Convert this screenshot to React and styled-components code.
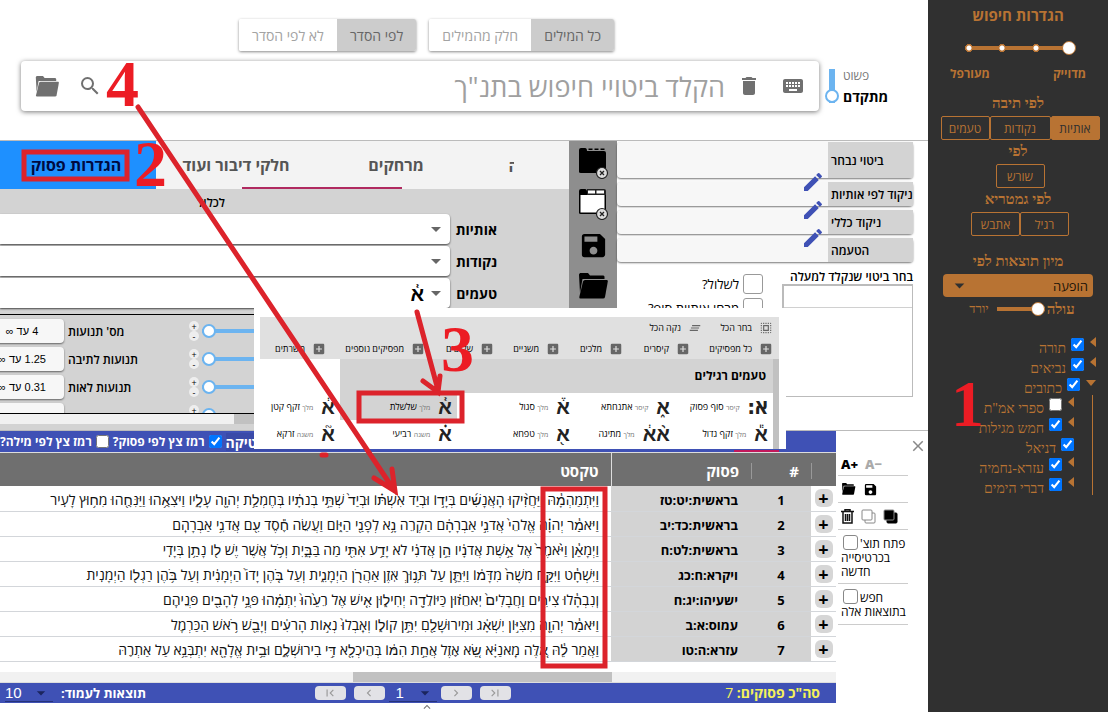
import React from "react";
import styled, { createGlobalStyle } from "styled-components";
import {
  MdKeyboard, MdDelete, MdSearch, MdEdit, MdSave, MdAddBox, MdSelectAll, MdClearAll,
  MdArrowDropDown, MdFirstPage, MdLastPage, MdChevronLeft, MdChevronRight, MdClose, MdExpandLess,
} from "react-icons/md";

const sans = `"Open Sans", "Noto Sans", "DejaVu Sans", sans-serif`;
const serif = `"Liberation Serif", "DejaVu Serif", serif`;
const orange = "#b87333";
const indigo = "#3f51b5";
const sky = "#6cb4f0";
const red = "#dc232b";

const GlobalStyle = createGlobalStyle`
  * { box-sizing: border-box; }
  body { margin: 0; background: #fff; color: #000; font-family: ${sans}; font-size: 12px; }
  button, input, select { font: inherit; color: inherit; margin: 0; }
  button { padding: 0; border: 0; background: none; cursor: pointer; }
`;

const Page = styled.div`
  position: relative;
  display: flex;
  direction: rtl;
  min-height: 100vh;
  overflow: hidden;
`;

const Slider = styled.input.attrs({ type: "range" })`
  appearance: none;
  display: block;
  min-width: 0;
  height: 14px;
  background: linear-gradient(${(p) => p.$color}, ${(p) => p.$color}) center / 100% 4px no-repeat;
  &::-webkit-slider-thumb {
    appearance: none;
    width: 14px;
    height: 14px;
    border: ${(p) => p.$edge || 1}px solid ${(p) => p.$color};
    border-radius: 50%;
    background: #fff;
  }
`;

/* ---------- settings sidebar ---------- */

const Sidebar = styled.aside`
  flex: 0 0 180px;
  display: flex;
  flex-direction: column;
  align-items: center;
  padding: 4px 8px 0;
  background: #303030;
  color: ${orange};
`;
const SideTitle = styled.h2`
  margin: 0;
  font-size: 15px;
  line-height: 22px;
  font-weight: 700;
`;
const SideHeading = styled.h3`
  margin: 0;
  font: bold 15px/22px ${serif};
  padding-bottom: 2px;
`;
const StepSlider = styled(Slider)`
  width: 114px;
  margin: 15px 0 0 2px;
  background:
    radial-gradient(circle at 7px 7px, #fff 2px, ${orange} 3px 4px, transparent 4px),
    radial-gradient(circle at 40px 7px, #fff 2px, ${orange} 3px 4px, transparent 4px),
    radial-gradient(circle at 74px 7px, #fff 2px, ${orange} 3px 4px, transparent 4px),
    linear-gradient(${orange}, ${orange}) center / 100px 4px no-repeat;
`;
const StepLabels = styled.div`
  display: flex;
  justify-content: space-between;
  width: 136px;
  margin: 10px 0 9px;
  font-size: 12px;
  line-height: 18px;
  font-weight: 700;
`;
const SideGroup = styled.div`
  display: flex;
  height: 24px;
  margin-right: -4px;
`;
const SideButton = styled.button`
  min-width: ${(p) => (p.$wide ? 61 : 49)}px;
  border: 1px solid ${orange};
  border-radius: 2px;
  background: ${(p) => (p.$on ? orange : "transparent")};
  color: ${(p) => (p.$on ? "#303030" : orange)};
  font-size: 12px;
`;
const SortHeading = styled(SideHeading)`
  margin-top: 14px;
`;
const SortSelect = styled.div`
  position: relative;
  width: 150px;
  height: 23px;
  border-radius: 4px;
  background: ${orange};
  color: #303030;
  select {
    width: 100%;
    height: 100%;
    padding: 0 5px;
    border: 0;
    background: transparent;
    appearance: none;
    font-size: 13px;
    line-height: 20px;
    color: #201408;
  }
  svg { position: absolute; left: 5px; top: 0; pointer-events: none; }
`;
const OrderRow = styled.div`
  display: flex;
  align-items: center;
  height: 24px;
  padding-left: 8px;
  font: 13px/24px ${serif};
  strong { font-size: 15px; }
`;
const OrderSlider = styled(Slider)`
  width: 48px;
  margin: 0 2px 0 8px;
`;
const Tree = styled.ul`
  align-self: stretch;
  margin: 14px 0 0;
  padding: 0;
  list-style: none;
  font: 14px/20px ${serif};
  ul {
    margin: 0 7px 0 0;
    padding: 0 18px 0 0;
    list-style: none;
    border-right: 1px solid ${orange};
  }
`;
const Branch = styled.label`
  display: flex;
  align-items: flex-start;
  height: 20px;
  padding-right: ${(p) => p.$indent || 0}px;
  gap: 5px;
  line-height: 27px;
  input { width: 13px; height: 13px; margin-top: 3px; }
  svg { margin: 2px 0 0 1px; }
`;

/* ---------- search head ---------- */

const Main = styled.main`
  position: relative;
  flex: 1;
  min-width: 0;
`;
const Toggles = styled.div`
  display: flex;
  justify-content: center;
  gap: 13px;
  padding: 19px 75px 10px 0;
`;
const ToggleGroup = styled.div`
  display: flex;
  height: 32px;
  border-radius: 2px;
  overflow: hidden;
  box-shadow: 0 1px 3px #0007;
`;
const Toggle = styled.button`
  padding: 0 13px;
  font-size: 14px;
  background: ${(p) => (p.$on ? "#cccccc" : "#fff")};
  color: ${(p) => (p.$on ? "#666" : "#a3a3a3")};
`;
const SearchRow = styled.div`
  display: flex;
  align-items: center;
  padding-left: 21px;
`;
const Mode = styled.label`
  display: flex;
  align-items: center;
  gap: 4px;
  direction: ltr;
  flex: 0 0 109px;
  padding-left: 6px;
`;
const ModeSlider = styled(Slider)`
  writing-mode: vertical-lr;
  direction: ltr;
  width: 14px;
  height: 34px;
  background: linear-gradient(${sky}, ${sky}) center / 6px 100% no-repeat;
`;
const ModeNames = styled.span`
  font-size: 12px;
  line-height: 21px;
  color: #777;
  strong { display: block; font-size: 14px; color: #000; font-weight: 700; }
`;
const SearchBox = styled.div`
  flex: 1;
  display: flex;
  align-items: center;
  height: 50px;
  padding: 0 14px 0 1px;
  border-radius: 4px;
  background: #fff;
  color: #707070;
  box-shadow: 0 1px 5px #0008;
  input {
    flex: 1;
    min-width: 0;
    height: 40px;
    margin-right: 12px;
    padding: 0;
    border: 0;
    outline: 0;
    background: none;
    font-size: 27px;
  }
  input::placeholder { color: #a0a0a0; opacity: 1; }
`;
const IconButton = styled.button`
  display: inline-flex;
  align-items: center;
  justify-content: center;
  width: ${(p) => p.$w || 24}px;
  height: ${(p) => p.$h || 24}px;
`;
const FieldIcons = styled.div`
  display: flex;
  gap: 20px;
`;

/* ---------- query panels ---------- */

const Panels = styled.section`
  display: flex;
  height: 291px;
  margin-top: 29px;
  border-top: 1px solid #bbb;
  border-bottom: 1px solid #bbb;
`;
const Fields = styled.div`
  flex: 0 0 311px;
  padding: 1px 15px 0 0;
`;
const Field = styled.div`
  position: relative;
  display: flex;
  align-items: center;
  height: ${(p) => p.$h || 24}px;
  margin-bottom: 4px;
  border-radius: 4px;
  background: #f7f7f7;
  box-shadow: 0 1px 2px #0008;
  svg { position: absolute; right: 88px; bottom: -16px; color: ${indigo}; z-index: 1; }
`;
const FieldName = styled.span`
  align-self: stretch;
  display: flex;
  align-items: center;
  direction: ltr;
  width: 85px;
  padding-left: 3px;
  background: #d3d3d3;
  font-size: 12px;
  font-weight: 600;
  white-space: nowrap;
`;
const FieldOptions = styled.div`
  display: flex;
  justify-content: space-between;
`;
const Chooser = styled.div`
  width: 131px;
  margin-top: 3px;
  font-size: 12px;
  line-height: 15px;
  font-weight: 600;
  white-space: nowrap;
`;
const ChoiceList = styled.div`
  height: 113px;
  border: 1px solid #bbb;
  border-width: 2px 1px 1px 2px;
  div { height: 22px; border-bottom: 1px solid #d0d0d0; }
`;
const Ticks = styled.div`
  display: flex;
  flex-direction: column;
  gap: 4px;
  margin-top: 8px;
  margin-left: auto;
  padding-right: 19px;
`;
const Tick = styled.label`
  display: flex;
  align-items: center;
  gap: 4px;
  height: 20px;
  font-size: 13px;
  white-space: nowrap;
  input {
    appearance: none;
    width: 20px;
    height: 20px;
    border: 1px solid #999;
    border-radius: 3px;
    background: #fff;
  }
`;
const Strip = styled.div`
  flex: 0 0 48px;
  display: flex;
  flex-direction: column;
  align-items: center;
  height: 168px;
  padding-top: 6px;
  gap: 9px;
  background: #8e8e8e;
`;
const Criteria = styled.div`
  flex: 1;
  min-width: 0;
  display: flex;
  flex-direction: column;
  background: #d3d3d3;
`;
const Tabs = styled.div`
  position: relative;
  display: flex;
  height: 48px;
  overflow: hidden;
  background: #f3f3f3;
  &::after {
    content: "";
    position: absolute;
    right: 167px;
    bottom: 0;
    width: 160px;
    height: 2px;
    background: #b02a60;
  }
`;
const Tab = styled.button`
  flex: 0 0 160px;
  background: ${(p) => (p.$on ? "#1e90ff" : "transparent")};
  color: ${(p) => (p.$on ? "#000a40" : "#555")};
  font-size: 16px;
  font-weight: 700;
`;
const EdgeTab = styled(Tab)`
  flex-basis: 93px;
  padding-right: 23px;
  span {
    display: inline-block;
    width: 5px;
    overflow: hidden;
    direction: ltr;
    vertical-align: middle;
  }
`;
const Include = styled.div`
  padding: 5px 344px 0 0;
  height: 25px;
  font-size: 12px;
  line-height: 18px;
  font-weight: 600;
`;
const SelectLine = styled.label`
  display: flex;
  align-items: center;
  gap: 6px;
  height: 32px;
  padding: 0 72px 2px 0;
  font-size: 14px;
  font-weight: 700;
`;
const SelectName = styled.span`
  flex: 0 0 39px;
`;
const Drop = styled.span`
  position: relative;
  flex: 1;
  height: 30px;
  border-radius: 0 4px 4px 0;
  background: #fff;
  box-shadow: 0 1px 2px #000a;
  select {
    width: 100%;
    height: 30px;
    padding: 0 26px 0 0;
    border: 0;
    background: transparent;
    appearance: none;
    font-size: 20px;
  }
  svg { position: absolute; right: 2px; top: 3px; color: #666; pointer-events: none; }
`;
const Ranges = styled.div`
  flex: 0 0 100px;
  margin-top: 4px;
  overflow: hidden;
  direction: ltr;
  border: solid #000;
  border-width: 1px 0;
`;
const Range = styled.div`
  display: flex;
  align-items: center;
  height: 28px;
  padding-top: 4px;
`;
const RangeValue = styled.span`
  flex: 0 0 84px;
  height: 24px;
  margin-left: -20px;
  border-radius: 4px;
  background: #f7f7f7;
  box-shadow: 0 1px 2px #0008;
  direction: rtl;
  font: 11px/24px "Liberation Sans", sans-serif;
  text-align: center;
`;
const RangeName = styled.span`
  flex: 0 0 121px;
  padding-left: 4px;
  font-size: 12px;
  font-weight: 600;
`;
const Steps = styled.span`
  display: flex;
  flex-direction: column;
  width: 17px;
  padding-left: 4px;
  button {
    width: 10px;
    height: 10px;
    border-radius: 50%;
    background: #eee;
    font-size: 9px;
    line-height: 9px;
  }
`;
const RangeSlider = styled(Slider)`
  flex: 1;
`;
const HScroll = styled.div`
  flex: 0 0 10px;
  height: 10px;
  background: linear-gradient(#c1c1c1, #c1c1c1) ${(p) => p.$x}px 0 / ${(p) => p.$w} 100% no-repeat #f1f1f1;
`;

/* ---------- accent picker ---------- */

const Picker = styled.div`
  position: absolute;
  left: 254px;
  top: 308px;
  width: 532px;
  height: 141px;
  padding: 9px 7px 0 6px;
  background: #fff;
  z-index: 2;
`;
const PickerBar = styled.div`
  height: 42px;
  background: #e0e0e0;
  font-size: 9px;
  line-height: 21px;
`;
const PickerLine = styled.div`
  display: flex;
  padding-right: 6px;
`;
const PickerAction = styled.button`
  display: flex;
  align-items: center;
  gap: 7px;
  width: ${(p) => p.$w}px;
  height: 21px;
  white-space: nowrap;
  svg { flex: none; color: #666; }
`;
const PickerBody = styled.div`
  height: 90px;
  padding-right: 6px;
  overflow: hidden;
  background: linear-gradient(#c1c1c1, #c1c1c1) right / 6px 100% no-repeat;
`;
const PickerTitle = styled.div`
  height: 34px;
  margin-left: 80px;
  padding-right: 7px;
  background: #d3d3d3;
  font-size: 12px;
  line-height: 34px;
  font-weight: 700;
`;
const Accents = styled.div`
  display: grid;
  grid-template-columns: 98px 100px 118px 117px 1fr;
  grid-auto-rows: 27px;
`;
const Accent = styled.button`
  display: flex;
  align-items: center;
  padding-right: 5px;
  gap: 8px;
  background: ${(p) => (p.$on ? "#d3d3d3" : "transparent")};
  font-size: 9px;
  white-space: nowrap;
  b { font: bold 20px/24px ${sans}; color: #222; min-width: 13px; }
  small { font-size: 7px; color: #777; }
`;

/* ---------- results ---------- */

const Lower = styled.section`
  display: flex;
`;
const Tools = styled.div`
  flex: 0 0 92px;
  direction: ltr;
  padding: 8px 0 0 2px;
`;
const CloseLine = styled.div`
  display: flex;
  justify-content: flex-end;
  height: 14px;
  color: #888;
`;
const ToolGroup = styled.div`
  display: flex;
  align-items: center;
  gap: 7px;
  width: 70px;
  height: ${(p) => p.$h || 27}px;
  padding-left: 3px;
  border-bottom: 1px solid #ccc;
  font-size: 12px;
  line-height: 14px;
`;
const Scale = styled.button`
  font-size: 13px;
  font-weight: 800;
  color: ${(p) => (p.$dim ? "#aaa" : "#000")};
`;
const ToolTick = styled.label`
  direction: ltr;
  white-space: nowrap;
  input {
    appearance: none;
    width: 15px;
    height: 15px;
    margin: 0 2px 0 2px;
    vertical-align: -2px;
    border: 1px solid #888;
    border-radius: 3px;
  }
`;
const Results = styled.div`
  flex: 1;
  min-width: 0;
`;
const HintBar = styled.div`
  display: flex;
  align-items: center;
  direction: ltr;
  height: 22px;
  overflow: hidden;
  border-bottom: 1px solid #ddd;
  background: linear-gradient(#c2185b, #c2185b) right 57px bottom / 45px 2px no-repeat ${indigo};
  color: #fff;
  font-size: 12px;
  font-weight: 700;
  white-space: nowrap;
  label { display: flex; align-items: center; gap: 4px; margin-right: 4px; }
  input { width: 13px; height: 13px; }
`;
const StatButton = styled.button`
  width: 134px;
  height: 18px;
  background: #3a4aa8;
  font-size: 14px;
  font-weight: 700;
  text-align: left;
`;
const Grid = styled.table`
  width: 100%;
  margin-bottom: 10px;
  table-layout: fixed;
  border-collapse: collapse;
  th {
    height: 33px;
    padding: 2px 12px 0 0;
    background: #6f6f6f;
    color: #fff;
    font-size: 15px;
    font-weight: 700;
    text-align: right;
  }
  td { height: 25px; padding: 3px 0 0; border-bottom: 1px solid #d3d6da; }
`;
const HeadMark = styled.span`
  display: block;
  height: 16px;
  line-height: 16px;
  border-left: 1px solid #999;
`;
const TextHead = styled.th`
  border-right: 1px solid #ddd;
`;
const Expand = styled.td`
  && { padding-top: 0; }
  text-align: center;
  line-height: 0;
  button {
    width: 18px;
    height: 18px;
    border-radius: 6px;
    background: #d6d6d6;
    font-size: 18px;
    font-weight: 700;
    line-height: 18px;
  }
`;
const NumCell = styled.td`
  background: #d3d3d3;
  text-align: center;
  font-size: 13px;
  line-height: 20px;
  font-weight: 700;
`;
const RefCell = styled(NumCell)`
  && { padding-right: 13px; }
  text-align: right;
`;
const VerseCell = styled.td`
  && { padding-right: 12px; }
  font: 14px/20px ${sans};
  white-space: nowrap;
  color: #111;
`;
const Footer = styled.div`
  display: grid;
  grid-template-columns: 1fr auto 1fr;
  align-items: center;
  height: 21px;
  padding: 0 16px 0 5px;
  border-top: 1px solid #ddd;
  background: ${indigo};
  color: #fff;
  font-size: 13px;
  font-weight: 700;
  white-space: nowrap;
`;
const Total = styled.span`
  color: #f5f15a;
  font-size: 14px;
  line-height: 18px;
  span { font-weight: 400; }
`;
const Pager = styled.nav`
  display: flex;
  align-items: center;
  direction: ltr;
  gap: 8px;
  > span { margin: 0 -4px; }
`;
const PageButton = styled.button`
  display: flex;
  align-items: center;
  justify-content: center;
  width: 31px;
  height: 14px;
  border-radius: 4px;
  background: #e2e2e6;
  color: #999;
`;
const MiniSelect = styled.span`
  position: relative;
  width: 48px;
  height: 18px;
  border-bottom: 1px solid #26337a;
  select {
    width: 100%;
    height: 18px;
    padding: 0 0 0 ${(p) => p.$pad || 0}px;
    border: 0;
    background: transparent;
    appearance: none;
    font: 15px/18px "Liberation Sans", sans-serif;
  }
  svg { position: absolute; right: 2px; top: -1px; color: #1b255e; pointer-events: none; }
`;
const PerPage = styled.label`
  display: flex;
  direction: ltr;
  align-items: center;
  gap: 8px;
`;
const More = styled.div`
  display: flex;
  align-items: center;
  justify-content: center;
  height: 8px;
  padding-left: 18px;
  color: #777;
`;

const Annotations = styled.svg`
  position: absolute;
  left: 0;
  top: 0;
  z-index: 5;
  pointer-events: none;
  rect, path { fill: none; stroke: ${red}; stroke-width: 5px; }
  text { font: bold 66px ${serif}; fill: #ec1c24; direction: ltr; }
`;

const FolderOpen = ({ w = 30, h = 26 }) => (
  <svg width={w} height={h} viewBox="0 0 30 26" fill="currentColor">
    <path d="M1 1.5 2 0h8l2 2.5h13.5l1 1V6H4.5L2 20z" />
    <path d="M7 7h22q1 0 .8 1.500L27 24q-.3 1.500-2 1.500H2.500Q1 25.500 1.300 24L5 8.500q.5-1.500 2-1.500z" />
  </svg>
);
const WindowIcon = ({ dark }) => (
  <svg width="32" height="32" viewBox="0 0 32 32">
    <path d="M2 3q0-2 2-2h4q2 0 2 3h17q2 0 2 2v19q0 1-2 1H4q-2 0-2-1z" fill="#000" />
    {dark ? (
      <path d="M11.500 3V1.500h4V3zM17.500 3V1.500h4V3zM23.500 3V1.500h4V3z" fill="#000" />
    ) : (
      <>
        <path d="M10 1h17q2 0 2 2v4H10z" fill="#222" />
        <path d="M11 2.500h7v3h-7zM19.500 2.500h7.500v3h-7.500zM3.500 7h24v17.500h-24z" fill="#fff" />
      </>
    )}
    <circle cx="25" cy="26" r="5.500" fill="#ddd" stroke="#222" strokeWidth="1.200" />
    <path d="m23 24 4 4m0-4-4 4" stroke="#222" strokeWidth="1.300" />
  </svg>
);
const Bin = () => (
  <svg width="13" height="15" viewBox="0 0 13 15" fill="none" stroke="#111" strokeWidth="1.500">
    <path d="M0 2.500h13M4 2V.8h5V2M2 3v11h9V3M4.500 5v7M6.500 5v7M8.500 5v7" />
  </svg>
);
const Sheets = ({ dark }) => (
  <svg width="15" height="15" viewBox="0 0 15 15">
    <rect x="4" y="4" width="10" height="10" rx="1" fill={dark ? "#000" : "#fff"} stroke={dark ? "#000" : "#888"} />
    <rect x="1" y="1" width="10" height="10" rx="1" fill={dark ? "#000" : "#fff"} stroke="#888" />
  </svg>
);
const Arrow = ({ open }) => (
  <svg width={open ? 10 : 6} height="10" viewBox={open ? "0 0 10 10" : "0 0 6 10"} fill={orange}>
    <path d={open ? "M0 3h10L5 9z" : "M6 0v10L0 5z"} />
  </svg>
);

const Node = ({ name, checked, indent, arrow = true, open }) => (
  <Branch $indent={indent}>
    {arrow && <Arrow open={open} />}
    <input type="checkbox" defaultChecked={checked} />
    {name}
  </Branch>
);

const verses = [
  ["בראשית:יט:טז", "וַיִּתְמַהְמָ֓הּ וַיַּחֲזִ֨יקוּ הָאֲנָשִׁ֜ים בְּיָד֣וֹ וּבְיַד אִשְׁתּ֗וֹ וּבְיַד֙ שְׁתֵּ֣י בְנֹתָ֔יו בְּחֶמְלַ֥ת יְהֹוָ֖ה עָלָ֑יו וַיֹּצִאֻ֥הוּ וַיַּנִּחֻ֖הוּ מִח֥וּץ לָעִֽיר"],
  ["בראשית:כד:יב", "וַיֹּאמַ֓ר יְהֹוָ֗ה אֱלֹהֵי֙ אֲדֹנִ֣י אַבְרָהָ֔ם הַקְרֵה נָ֥א לְפָנַ֖י הַיּ֑וֹם וַעֲשֵׂה חֶ֕סֶד עִ֖ם אֲדֹנִ֥י אַבְרָהָֽם"],
  ["בראשית:לט:ח", "וַיְמָאֵ֓ן וַיֹּ֙אמֶר֙ אֶל אֵ֣שֶׁת אֲדֹנָ֔יו הֵ֣ן אֲדֹנִ֔י לֹא יָדַ֥ע אִתִּ֖י מַה בַּבָּ֑יִת וְכֹ֥ל אֲשֶׁר יֶשׁ ל֖וֹ נָתַ֥ן בְּיָדִֽי"],
  ["ויקרא:ח:כג", "וַיִּשְׁחָ֓ט וַיִּקַּ֤ח מֹשֶׁה֙ מִדָּמ֔וֹ וַיִּתֵּ֛ן עַל תְּנ֥וּךְ אֹֽזֶן אַהֲרֹ֖ן הַיְמָנִ֑ית וְעַל בֹּ֤הֶן יָדוֹ֙ הַיְמָנִ֔ית וְעַל בֹּ֥הֶן רַגְל֖וֹ הַיְמָנִֽית"],
  ["ישעיהו:יג:ח", "וְֽנִבְהָ֓לוּ צִירִ֤ים וַֽחֲבָלִים֙ יֹֽאחֵז֔וּן כַּיּוֹלֵדָ֖ה יְחִיל֑וּן אִ֤ישׁ אֶל רֵעֵ֙הוּ֙ יִתְמָ֔הוּ פְּנֵ֥י לְהָבִ֖ים פְּנֵיהֶֽם"],
  ["עמוס:א:ב", "וַיֹּאמַ֓ר יְהֹוָ֤ה מִצִּיּ֣וֹן יִשְׁאָ֔ג וּמִירוּשָׁלַ֖םִ יִתֵּ֣ן קוֹל֑וֹ וְאָֽבְלוּ֙ נְא֣וֹת הָרֹעִ֔ים וְיָבֵ֖שׁ רֹ֥אשׁ הַכַּרְמֶֽל"],
  ["עזרא:ה:טו", "וַאֲמַר לֵ֓הּ אֵ֚לֶּה מָֽאנַיָּ֔א שֵׂ֚א אֵֽזֶל אֲחֵ֣ת הִמּ֔וֹ בְּהֵיכְלָ֖א דִּ֣י בִירוּשְׁלֶ֑ם וּבֵ֥ית אֱלָהָ֖א יִתְבְּנֵ֥א עַל אַתְרֵֽהּ"],
];

const ranks = [["כל מפסיקים", 83], ["קיסרים", 67], ["מלכים", 63], ["משניים", 66], ["שלישים", 69], ["מפסיקים נוספים", 99], ["משרתים", 60]];

const accents = [
  ["א׃", "קיסר", "סוף פסוק"], ["א֑", "קיסר", "אתנחתא"], ["א֒", "מלך", "סגול"], ["א֓", "מלך", "שלשלת"], ["א֔", "מלך", "זקף קטן"],
  ["א֕", "מלך", "זקף גדול"], ["א֨א֔", "מלך", "מתיגה"], ["א֖", "מלך", "טפחא"], ["א֗", "משנה", "רביעי"], ["א֘", "משנה", "זרקא"],
];

const ranges = [["4 עד ∞", "מס' תנועות"], ["1.25 עד ∞", "תנועות לתיבה"], ["0.31 עד ∞", "תנועות לאות"], ["", ""]];

const letterSelects = [["אותיות", ""], ["נקודות", ""], ["טעמים", "א֓"]];

export default function App() {
  return (
    <Page>
      <GlobalStyle />
      <Sidebar>
        <SideTitle>הגדרות חיפוש</SideTitle>
        <StepSlider $color={orange} min="0" max="3" defaultValue="0" aria-label="דיוק" />
        <StepLabels><span>מדוייק</span><span>מעורפל</span></StepLabels>
        <SideHeading>לפי תיבה</SideHeading>
        <SideGroup>
          <SideButton $on>אותיות</SideButton>
          <SideButton $wide>נקודות</SideButton>
          <SideButton>טעמים</SideButton>
        </SideGroup>
        <SideHeading>לפי</SideHeading>
        <SideGroup><SideButton>שורש</SideButton></SideGroup>
        <SideHeading>לפי גמטריא</SideHeading>
        <SideGroup><SideButton>רגיל</SideButton><SideButton>אתבש</SideButton></SideGroup>
        <SortHeading>מיון תוצאות לפי</SortHeading>
        <SortSelect>
          <select aria-label="מיון תוצאות לפי"><option>הופעה</option></select>
          <MdArrowDropDown size={23} />
        </SortSelect>
        <OrderRow>
          <strong>עולה</strong>
          <OrderSlider $color={orange} min="0" max="1" defaultValue="0" aria-label="סדר" />
          יורד
        </OrderRow>
        <Tree>
          <li><Node name="תורה" checked indent={4} /></li>
          <li><Node name="נביאים" checked indent={4} /></li>
          <li>
            <Node name="כתובים" checked indent={4} open />
            <ul>
              <li><Node name={'ספרי אמ"ת'} /></li>
              <li><Node name="חמש מגילות" checked /></li>
              <li><Node name="דניאל" checked arrow={false} /></li>
              <li><Node name="עזרא-נחמיה" checked /></li>
              <li><Node name="דברי הימים" checked /></li>
            </ul>
          </li>
        </Tree>
      </Sidebar>

      <Main>
        <Toggles>
          <ToggleGroup><Toggle $on>כל המילים</Toggle><Toggle>חלק מהמילים</Toggle></ToggleGroup>
          <ToggleGroup><Toggle $on>לפי הסדר</Toggle><Toggle>לא לפי הסדר</Toggle></ToggleGroup>
        </Toggles>
        <SearchRow>
          <Mode>
            <ModeSlider $color={sky} $edge={2} min="0" max="1" defaultValue="1" />
            <ModeNames>פשוט<strong>מתקדם</strong></ModeNames>
          </Mode>
          <SearchBox>
            <FieldIcons>
              <IconButton aria-label="מקלדת"><MdKeyboard size={24} /></IconButton>
              <IconButton aria-label="מחיקה"><MdDelete size={24} /></IconButton>
            </FieldIcons>
            <input aria-label="חיפוש" placeholder={'הקלד ביטויי חיפוש בתנ"ך'} />
            <IconButton aria-label="חפש" $w={36}><MdSearch size={24} /></IconButton>
            <IconButton aria-label="פתיחה" $w={50}><FolderOpen w={24} h={21} /></IconButton>
          </SearchBox>
        </SearchRow>

        <Panels>
          <Fields>
            <Field $h={36}><FieldName>ביטוי נבחר</FieldName><MdEdit size={24} /></Field>
            <Field><FieldName>ניקוד לפי אותיות</FieldName><MdEdit size={24} /></Field>
            <Field><FieldName>ניקוד כללי</FieldName><MdEdit size={24} /></Field>
            <Field><FieldName>הטעמה</FieldName></Field>
            <FieldOptions>
              <Chooser>בחר ביטוי שנקלד למעלה<ChoiceList><div /></ChoiceList></Chooser>
              <Ticks>
                <Tick><input type="checkbox" />לשלול?</Tick>
                <Tick><input type="checkbox" />מרחו אותיות סופ?</Tick>
              </Ticks>
            </FieldOptions>
          </Fields>
          <Strip>
            <IconButton aria-label="סגירה" $w={32} $h={32}><WindowIcon dark /></IconButton>
            <IconButton aria-label="ניקוי" $w={32} $h={32}><WindowIcon /></IconButton>
            <IconButton aria-label="שמירה" $w={32} $h={32}><MdSave size={31} /></IconButton>
            <IconButton aria-label="פתיחה" $w={32} $h={32}><FolderOpen /></IconButton>
          </Strip>
          <Criteria>
            <Tabs>
              <EdgeTab><span>ה</span></EdgeTab>
              <Tab>מרחקים</Tab>
              <Tab>חלקי דיבור ועוד</Tab>
              <Tab $on>הגדרות פסוק</Tab>
            </Tabs>
            <Include>לכלול</Include>
            {letterSelects.map(([name, value]) => (
              <SelectLine key={name}>
                <SelectName>{name}</SelectName>
                <Drop><select><option>{value}</option></select><MdArrowDropDown size={24} /></Drop>
              </SelectLine>
            ))}
            <Ranges>
              {ranges.map(([v, n], i) => (
                <Range key={i}>
                  <RangeValue>{v}</RangeValue>
                  <RangeName>{n}</RangeName>
                  <Steps><button>+</button><button>-</button></Steps>
                  <RangeSlider $color={sky} $edge={2} defaultValue="0" aria-label={n || "טווח"} />
                </Range>
              ))}
            </Ranges>
            <HScroll $x={234} $w="100%" />
          </Criteria>
        </Panels>

        <Lower>
          <Tools>
            <CloseLine><IconButton aria-label="סגור" $w={20} $h={14}><MdClose size={18} /></IconButton></CloseLine>
            <ToolGroup $h={23}><Scale>A+</Scale><Scale $dim>A−</Scale></ToolGroup>
            <ToolGroup><FolderOpen w={15} h={12} /><MdSave size={15} /></ToolGroup>
            <ToolGroup><Bin /><Sheets /><Sheets dark /></ToolGroup>
            <ToolGroup $h={54}>
              <ToolTick><input type="checkbox" /><bdi dir="rtl">פתח תוצ'</bdi><br />בכרטיסייה<br />חדשה</ToolTick>
            </ToolGroup>
            <ToolGroup $h={41}><ToolTick><input type="checkbox" />חפש<br />בתוצאות אלה</ToolTick></ToolGroup>
          </Tools>
          <Results>
            <HintBar>
              <label><bdi dir="rtl">רמז צץ לפי מילה?</bdi><input type="checkbox" /></label>
              <label><bdi dir="rtl">רמז צץ לפי פסוק?</bdi><input type="checkbox" defaultChecked /></label>
              <StatButton>סטטיסטיקה</StatButton>
            </HintBar>
            <Grid>
              <colgroup><col width="25" /><col width="60" /><col width="140" /><col /></colgroup>
              <thead>
                <tr>
                  <th><HeadMark /></th><th><HeadMark>#</HeadMark></th><th>פסוק</th><TextHead>טקסט</TextHead>
                </tr>
              </thead>
              <tbody>
                {verses.map(([place, text], i) => (
                  <tr key={place}>
                    <Expand><button aria-label="הרחב">+</button></Expand>
                    <NumCell>{i + 1}</NumCell>
                    <RefCell>{place}</RefCell>
                    <VerseCell>{text}</VerseCell>
                  </tr>
                ))}
              </tbody>
            </Grid>
            <HScroll $x={353} $w="259px" />
            <Footer>
              <Total>סה"כ פסוקים: <span>7</span></Total>
              <Pager>
                <PageButton aria-label="ראשון"><MdFirstPage size={14} /></PageButton>
                <PageButton aria-label="הקודם"><MdChevronLeft size={14} /></PageButton>
                <MiniSelect $pad={7}><select aria-label="עמוד"><option>1</option></select><MdArrowDropDown size={20} /></MiniSelect>
                <PageButton aria-label="הבא"><MdChevronRight size={14} /></PageButton>
                <PageButton aria-label="אחרון"><MdLastPage size={14} /></PageButton>
              </Pager>
              <PerPage>
                <MiniSelect><select><option>10</option></select><MdArrowDropDown size={20} /></MiniSelect>
                <bdi dir="rtl">תוצאות לעמוד:</bdi>
              </PerPage>
            </Footer>
            <More><MdExpandLess size={14} /></More>
          </Results>
        </Lower>

        <Picker>
          <PickerBar>
            <PickerLine>
              <PickerAction $w={71}><MdSelectAll size={14} />בחר הכל</PickerAction>
              <PickerAction $w={60}><MdClearAll size={14} />נקה הכל</PickerAction>
            </PickerLine>
            <PickerLine>
              {ranks.map(([n, w]) => <PickerAction key={n} $w={w}><MdAddBox size={14} />{n}</PickerAction>)}
            </PickerLine>
          </PickerBar>
          <PickerBody>
            <PickerTitle>טעמים רגילים</PickerTitle>
            <Accents>
              {accents.map(([g, r, n]) => (
                <Accent key={n} $on={n === "שלשלת"}><b>{g}</b><span><small>{r}</small> {n}</span></Accent>
              ))}
            </Accents>
          </PickerBody>
        </Picker>
      </Main>

      <Annotations width="1108" height="712" viewBox="0 0 1108 712" aria-hidden="true">
        <rect x="24" y="152" width="103" height="27" />
        <rect x="359" y="393" width="103" height="28" />
        <rect x="543" y="489" width="62" height="177" />
        <path d="M138 107 394 490M374 478 395 491 392 469" strokeLinecap="round" />
        <path d="M417 312 438 390M423 381 438 392 440 376" strokeLinecap="round" />
        <path d="M322 455h4" strokeLinecap="round" />
        <text x="106" y="106">4</text>
        <text x="134" y="186">2</text>
        <text x="441" y="371">3</text>
        <text x="951" y="426">1</text>
      </Annotations>
    </Page>
  );
}
